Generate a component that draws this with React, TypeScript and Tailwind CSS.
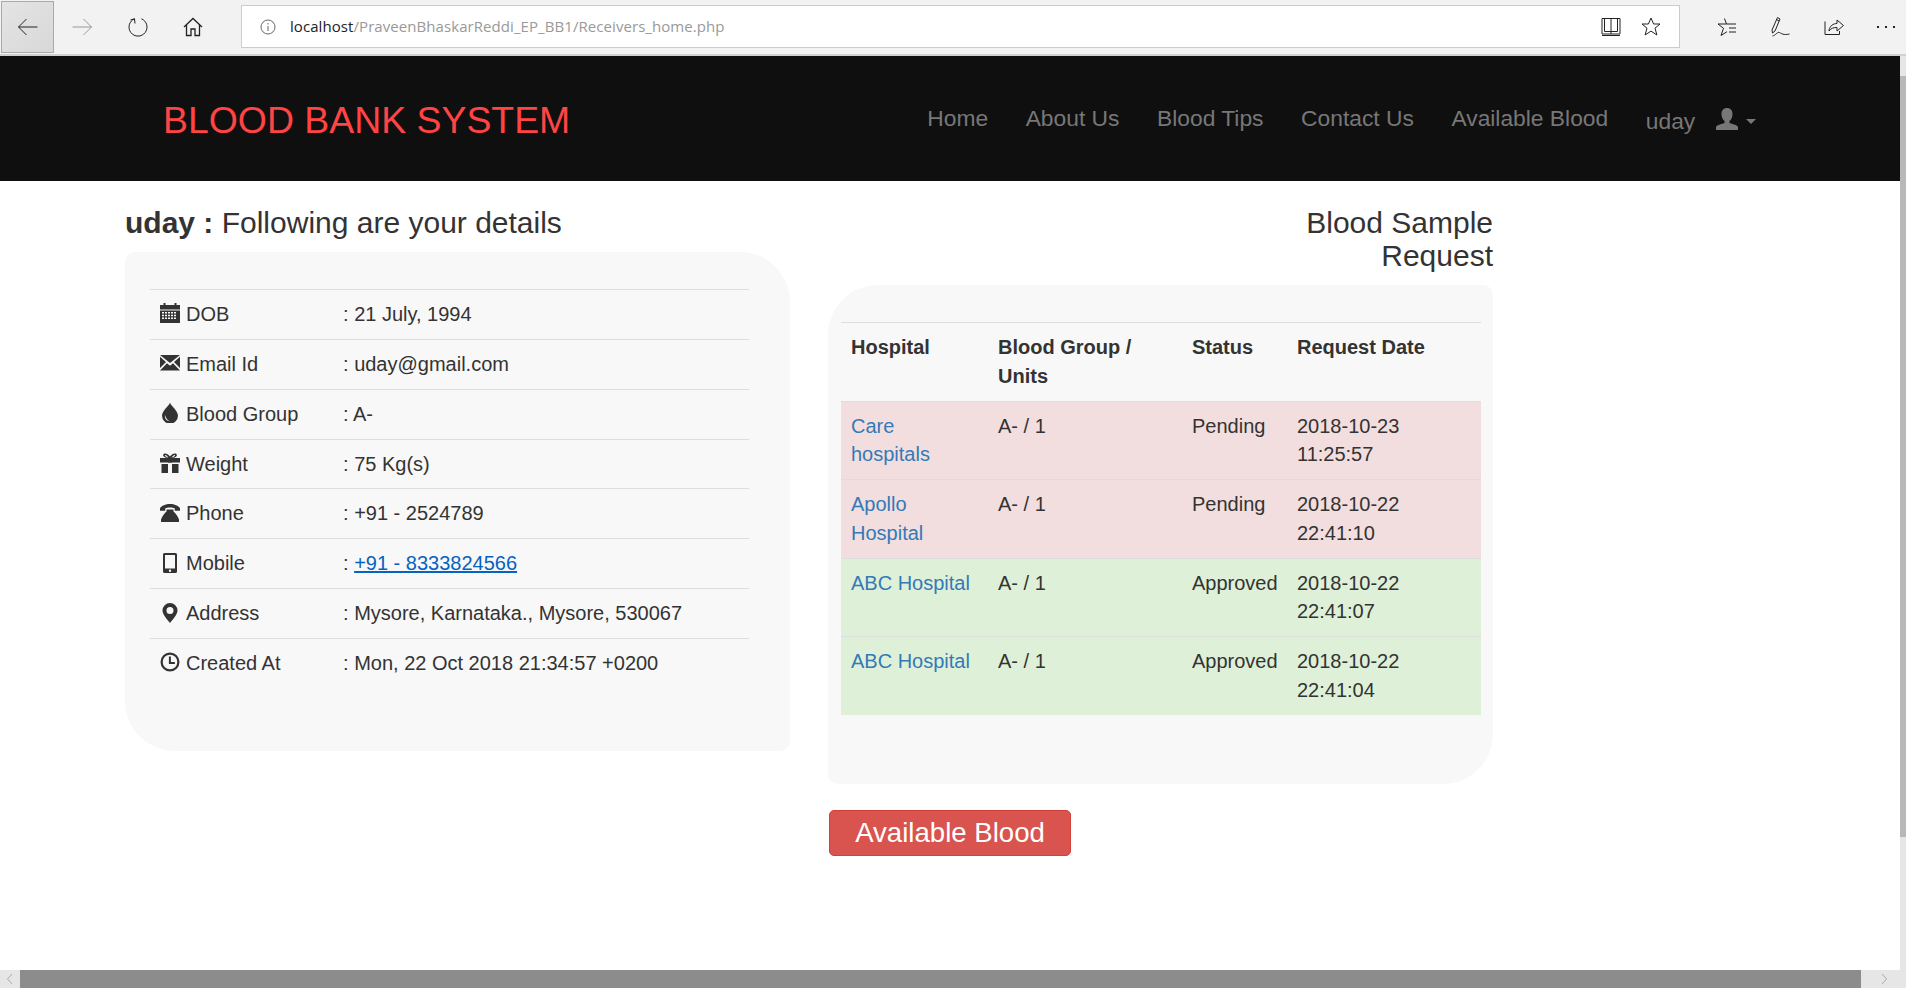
import React from 'react';

const ic = 'w-5 h-5 shrink-0 fill-[#333] mt-[-2px]';

const CalendarIcon = () => (
  <svg viewBox="0 0 20 20" className={ic}>
    <path d="M3.5 0h2v2h9V0h2v2H20v4.500H0V2h3.500z" />
    <path fillRule="evenodd" d="M0 7.500h20V20H0zM2 9v1.500h2V9zm3 0v1.500h2V9zm3 0v1.500h2V9zm3 0v1.500h2V9zm3 0v1.500h2V9zM2 11.700v1.500h2v-1.500zm3 0v1.500h2v-1.500zm3 0v1.500h2v-1.500zm3 0v1.500h2v-1.500zm3 0v1.500h2v-1.500zM2 14.400v1.500h2v-1.500zm3 0v1.500h2v-1.500zm3 0v1.500h2v-1.500zm3 0v1.500h2v-1.500zm3 0v1.500h2v-1.500z" />
  </svg>
);

const EnvelopeIcon = () => (
  <svg viewBox="0 0 20 20" className={ic}>
    <path d="M0 2h20l-10 8z" />
    <path d="M0 3.800l6 5.200-6 6zM20 3.800L14 9l6 6z" />
    <path d="M7 10.200l3 2.500 3-2.500 7 7.300H0z" />
  </svg>
);

const TintIcon = () => (
  <svg viewBox="0 0 20 20" className={ic}>
    <path fillRule="evenodd" d="M10-.5c1 3.800 8 8 8 13.200a8 8 0 0 1-16 0C2 7.500 9 3.300 10-.5zM5 12c-.6 3.400 1.500 6 4.800 6.200C7.400 17 5.700 15 5 12z" />
  </svg>
);

const GiftIcon = () => (
  <svg viewBox="0 0 20 20" className={ic}>
    <path fillRule="evenodd" d="M0 5h7.400C5 4.600 2.600 3.400 3.200 1.700 3.900-.4 7.800.2 10 3.600 12.200.2 16.100-.4 16.800 1.700c.6 1.700-1.800 2.900-4.200 3.300H20v4.600H0zM5 2.200c-.4.6 1.200 1.700 3.200 2.300C7.400 3 5.600 1.600 5 2.200zm10 0c-.6-.6-2.400.8-3.200 2.300 2-.6 3.600-1.700 3.200-2.300z" />
    <path d="M8 5h4v4.600H8zM1.500 11H8v9H1.500zM12 11h6.500v9H12z" />
  </svg>
);

const PhoneAltIcon = () => (
  <svg viewBox="0 0 20 20" className={ic}>
    <path d="M10 1c4.500 0 8.400 1.700 10 4.300v2.400h-5.200V5.500C13.500 4.800 11.800 4.500 10 4.500s-3.500.3-4.800 1v2.200H0V5.300C1.600 2.700 5.500 1 10 1z" />
    <path d="M6.500 6.500h7v2c2 1.500 4.500 5 5.500 8v2.500H1v-2.500c1-3 3.500-6.500 5.500-8z" />
  </svg>
);

const MobileIcon = () => (
  <svg viewBox="0 0 20 20" className={ic}>
    <path fillRule="evenodd" d="M4.500 0h11A1.500 1.500 0 0 1 17 1.500v17a1.500 1.500 0 0 1-1.500 1.500h-11A1.500 1.500 0 0 1 3 18.500v-17A1.500 1.500 0 0 1 4.500 0zM5 2v13.500h10V2zm5 14.500a1.200 1.200 0 1 0 0 2.400 1.200 1.200 0 0 0 0-2.400z" />
  </svg>
);

const MarkerIcon = () => (
  <svg viewBox="0 0 20 20" className={ic}>
    <path fillRule="evenodd" d="M10 0a7.500 7.500 0 0 1 7.500 7.500c0 3.800-4.500 9-7.500 12.500C7 16.500 2.500 11.300 2.500 7.500A7.500 7.500 0 0 1 10 0zm0 4a3.500 3.500 0 1 0 0 7 3.500 3.500 0 0 0 0-7z" />
  </svg>
);

const ClockIcon = () => (
  <svg viewBox="0 0 20 20" className={ic}>
    <path fillRule="evenodd" d="M10 .5a9.500 9.500 0 1 1 0 19 9.500 9.500 0 0 1 0-19zm0 2.200a7.300 7.300 0 1 0 0 14.600 7.300 7.300 0 0 0 0-14.600z" />
    <path d="M8.900 4.500h2v5.400h4v2h-6z" />
  </svg>
);

const stroke = { fill: 'none', stroke: 'currentColor', strokeWidth: 1 };

const BackIcon = ({ muted }: { muted?: boolean }) => (
  <svg viewBox="0 0 20 20" width={20} height={20} className={muted ? 'text-[#999]' : 'text-[#222]'} {...stroke}>
    <path d={muted ? 'M.5 10h19M11.500 2l8 8-8 8' : 'M19.500 10H.5M8.500 2l-8 8 8 8'} />
  </svg>
);

const rows = [
  { icon: <CalendarIcon />, label: 'DOB', value: '21 July, 1994' },
  { icon: <EnvelopeIcon />, label: 'Email Id', value: 'uday@gmail.com' },
  { icon: <TintIcon />, label: 'Blood Group', value: 'A-' },
  { icon: <GiftIcon />, label: 'Weight', value: '75 Kg(s)' },
  { icon: <PhoneAltIcon />, label: 'Phone', value: '+91 - 2524789' },
  { icon: <MobileIcon />, label: 'Mobile', value: '+91 - 8333824566', tel: true },
  { icon: <MarkerIcon />, label: 'Address', value: 'Mysore, Karnataka., Mysore, 530067' },
  { icon: <ClockIcon />, label: 'Created At', value: 'Mon, 22 Oct 2018 21:34:57 +0200' },
];

const requests = [
  { hospital: 'Care hospitals', status: 'Pending', date: '2018-10-23 11:25:57', bg: 'bg-[#f2dede]' },
  { hospital: 'Apollo Hospital', status: 'Pending', date: '2018-10-22 22:41:10', bg: 'bg-[#f2dede]' },
  { hospital: 'ABC Hospital', status: 'Approved', date: '2018-10-22 22:41:07', bg: 'bg-[#dff0d8]' },
  { hospital: 'ABC Hospital', status: 'Approved', date: '2018-10-22 22:41:04', bg: 'bg-[#dff0d8]' },
];

const navLinks = ['Home', 'About Us', 'Blood Tips', 'Contact Us', 'Available Blood'];

const Toolbar = () => (
  <div className="h-14 shrink-0 bg-[#f2f2f2] border-b-2 border-[#d0d0d0] flex items-center font-['Open_Sans',sans-serif]">
    <div className="ml-[1px] w-[53px] h-[52px] mt-[-1px] border border-[#aaa] bg-gradient-to-br from-[#e4e4e4] to-[#d8d8d8] flex items-center justify-center">
      <BackIcon />
    </div>
    <div className="w-[56px] flex justify-center"><BackIcon muted /></div>
    <div className="w-[55px] flex justify-center text-[#222]">
      <svg viewBox="0 0 20 20" width={20} height={20} {...stroke}>
        <path d="M6.500 1.800A9 9 0 1 0 13.500 1.800M6.500 1.800L7 6.500M6.500 1.800L2.500 3" />
      </svg>
    </div>
    <div className="w-[55px] flex justify-center text-[#222]">
      <svg viewBox="0 0 20 20" width={20} height={20} {...stroke} strokeWidth={1.3}>
        <path d="M1 10L10 1.500 19 10M3.500 8v10.500h4.500V12h4v6.500h4.500V8" />
      </svg>
    </div>
    <div className="ml-[21px] w-[1439px] h-[43px] mb-[1px] bg-white border border-[#ccc] flex items-center">
      <svg viewBox="0 0 16 16" width={16} height={16} className="ml-[18px] text-[#666]" {...stroke}>
        <circle cx="8" cy="8" r="7" />
        <path d="M8 7v5M8 4v1.500" />
      </svg>
      <div className="ml-[14px] flex-1 text-[15px] tracking-[0.07px] text-[#999]"><span className="text-[#222]">localhost</span>/PraveenBhaskarReddi_EP_BB1/Receivers_home.php</div>
      <svg viewBox="0 0 20 20" width={20} height={20} className="text-[#222]" {...stroke}>
        <path d="M1 1.500h18V17H1zM10 1.500V17M3.500 1.500V14.500H10h6.500V1.500M1 18.500h18" />
      </svg>
      <svg viewBox="0 0 20 20" width={20} height={20} className="ml-[20px] mr-[18px] text-[#222]" {...stroke}>
        <path d="M10 1l2.600 6h6.400l-5 4.200 1.900 6.800-5.900-3.900-5.900 3.900 1.900-6.800-5-4.200h6.400z" />
      </svg>
    </div>
    <div className="flex items-center text-[#222]">
      <svg viewBox="0 0 20 20" width={20} height={20} className="ml-[37px]" {...stroke}>
        <path d="M7.500 1.500L9.500 7H1l5.500 4.300L4 18.500l6-3.800M9.500 7H19M12 11h7M12 15h7" />
      </svg>
      <svg viewBox="0 0 22 22" width={22} height={22} className="ml-[33px]" {...stroke}>
        <path d="M7.500 1.500L10 3 5 15l-2.500 2-.5-3zM6.500 3.500L9 5M2.500 20c3-.5 5-4.500 7-3.500 1.500.8 4 3 10 1.500" />
      </svg>
      <svg viewBox="0 0 20 20" width={20} height={20} className="ml-[32px]" {...stroke}>
        <path d="M1 4.500v13h14.500V14M5 13c1-4 4-6.500 8-6.500V3l6.500 5.500-6.500 5.500v-3.500c-3 0-6 .5-8 3.500z" />
      </svg>
      <div className="ml-[33px] flex gap-[6px]">
        <span className="w-[2px] h-[2px] bg-[#222]" />
        <span className="w-[2px] h-[2px] bg-[#222]" />
        <span className="w-[2px] h-[2px] bg-[#222]" />
      </div>
    </div>
  </div>
);

const App = () => (
  <div className="w-[1906px] h-[988px] flex flex-col overflow-hidden bg-white text-[#333] text-[20px] font-['Liberation_Sans',Arial,sans-serif]">
    <Toolbar />
    <div className="flex flex-1 min-h-0">
      <div className="flex-1 min-w-0">
        <nav className="h-[125px] bg-[#0f0f0f] flex items-center pl-[163px]">
          <a className="text-[37.4px] text-[#ff4444] mt-[3px] whitespace-nowrap">BLOOD BANK SYSTEM</a>
          <ul className="ml-[357px] flex gap-[37.6px] text-[22.8px] text-[#777] whitespace-nowrap">
            {navLinks.map(link => <li key={link}>{link}</li>)}
          </ul>
          <div className="ml-[37.6px] mt-[5px] flex items-center text-[22.8px] text-[#777]">
            <span>uday</span>
            <svg viewBox="0 0 22 22" className="ml-[21px] mb-[4px] w-[22px] h-[22px] fill-[#777]">
              <path d="M11 0c3.500 0 5.500 2.500 5.500 6 0 3-1 5.500-3 7v2c3 1 8 2 8.500 4v3H0v-3c.5-2 5.500-3 8.500-4v-2c-2-1.500-3-4-3-7 0-3.500 2-6 5.500-6z" />
            </svg>
            <span className="ml-[8px] w-0 h-0 border-x-[5px] border-x-transparent border-t-[5px] border-t-[#777]" />
          </div>
        </nav>
        <div className="pl-[125px] flex gap-[38px] items-start">
          <section className="w-[665px]">
            <h3 className="mt-[25px] mb-[13px] text-[30px] leading-[33px]"><b>uday :</b> Following are your details</h3>
            <div className="h-[499px] bg-[#f8f8f8] rounded-tl-[10px] rounded-br-[10px] rounded-tr-[50px] rounded-bl-[50px] pt-[37px] pl-[25px] pr-[41px]">
              <table className="w-full border-collapse">
                <tbody>
                  {rows.map(row => (
                    <tr key={row.label} className="border-t border-[#ddd]">
                      <td className="w-[183px] px-[10px] py-[10px] leading-[28.86px]">
                        <div className="flex items-center gap-[6px]">{row.icon}<span>{row.label}</span></div>
                      </td>
                      <td className="px-[10px] py-[10px] leading-[28.86px]">
                        : {row.tel ? <a className="text-[#0563c1] underline">{row.value}</a> : row.value}
                      </td>
                    </tr>
                  ))}
                </tbody>
              </table>
            </div>
          </section>
          <section className="w-[665px]">
            <h3 className="mt-[25px] mb-[13px] text-[30px] leading-[33px] text-right">Blood Sample<br />Request</h3>
            <div className="h-[499px] bg-[#f8f8f8] rounded-tr-[10px] rounded-bl-[10px] rounded-tl-[50px] rounded-br-[50px] pt-[37px] pl-[13px] pr-[12px]">
              <table className="w-full border-collapse table-fixed">
                <thead>
                  <tr className="border-t border-[#ddd]">
                    <th className="w-[147px] p-[10px] text-left align-top leading-[28.75px]">Hospital</th>
                    <th className="w-[194px] p-[10px] text-left align-top leading-[28.75px]">Blood Group / Units</th>
                    <th className="w-[105px] p-[10px] text-left align-top leading-[28.75px]">Status</th>
                    <th className="p-[10px] text-left align-top leading-[28.75px]">Request Date</th>
                  </tr>
                </thead>
                <tbody>
                  {requests.map(req => (
                    <tr key={req.date} className={`${req.bg} border-t border-[#ddd]`}>
                      <td className="p-[10px] align-top leading-[28.75px] text-[#337ab7]">{req.hospital}</td>
                      <td className="p-[10px] align-top leading-[28.75px]">A- / 1</td>
                      <td className="p-[10px] align-top leading-[28.75px]">{req.status}</td>
                      <td className="p-[10px] align-top leading-[28.75px]">{req.date}</td>
                    </tr>
                  ))}
                </tbody>
              </table>
            </div>
            <button className="mt-[26px] ml-[1px] w-[242px] h-[46px] bg-[#d9534f] border border-[#d43f3a] rounded-[5px] text-white text-[27.6px] leading-none">Available Blood</button>
          </section>
        </div>
      </div>
      <div className="w-[6px] bg-[#e6e6e6] pt-[20px]">
        <div className="h-[761px] bg-[#b8b8b8]" />
      </div>
    </div>
    <div className="h-[18px] shrink-0 flex bg-[#e6e6e6]">
      <div className="w-[20px] flex items-center justify-center text-[#aaa]">
        <svg viewBox="0 0 8 12" width={8} height={12} {...stroke}><path d="M6 1L1.500 6 6 11" /></svg>
      </div>
      <div className="w-[1841px] bg-[#8c8c8c]" />
      <div className="flex-1 flex items-center justify-center text-[#aaa]">
        <svg viewBox="0 0 8 12" width={8} height={12} {...stroke}><path d="M2 1l4.500 5L2 11" /></svg>
      </div>
    </div>
  </div>
);

export default App;
